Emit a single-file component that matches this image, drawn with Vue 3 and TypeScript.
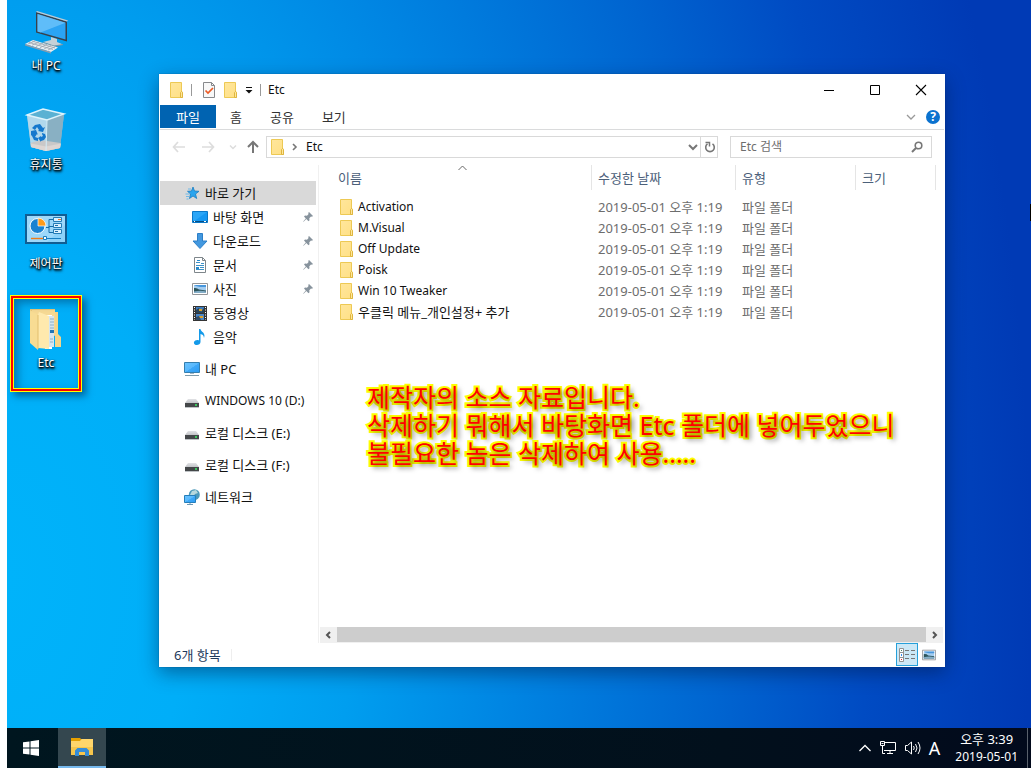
<script setup lang="ts">
interface DesktopItem { kind: string; label: string; marked?: boolean }
interface NavItem { icon: string; label: string; level: number; pinned?: boolean; active?: boolean; spaced?: boolean }

const desktopItems: DesktopItem[] = [
  { kind: 'pc', label: '내 PC' },
  { kind: 'bin', label: '휴지통' },
  { kind: 'control', label: '제어판' },
  { kind: 'etc', label: 'Etc', marked: true },
]
const tabs: string[] = ['파일', '홈', '공유', '보기']
const navItems: NavItem[] = [
  { icon: 'star', label: '바로 가기', level: 1, active: true },
  { icon: 'desktop', label: '바탕 화면', level: 2, pinned: true },
  { icon: 'download', label: '다운로드', level: 2, pinned: true },
  { icon: 'doc', label: '문서', level: 2, pinned: true },
  { icon: 'photo', label: '사진', level: 2, pinned: true },
  { icon: 'video', label: '동영상', level: 2 },
  { icon: 'music', label: '음악', level: 2 },
  { icon: 'pc', label: '내 PC', level: 1, spaced: true },
  { icon: 'drive', label: 'WINDOWS 10 (D:)', level: 1, spaced: true },
  { icon: 'drive', label: '로컬 디스크 (E:)', level: 1, spaced: true },
  { icon: 'drive', label: '로컬 디스크 (F:)', level: 1, spaced: true },
  { icon: 'network', label: '네트워크', level: 1, spaced: true },
]
const files: string[] = ['Activation', 'M.Visual', 'Off Update', 'Poisk', 'Win 10 Tweaker', '우클릭 메뉴_개인설정+ 추가']
const notes: string[] = [
  '제작자의 소스 자료입니다.',
  '삭제하기 뭐해서 바탕화면 Etc 폴더에 넣어두었으니',
  '불필요한 놈은 삭제하여 사용.....',
]
const isKorean = (text: string): boolean => /[가-힣]/.test(text)
</script>

<template>
  <div class="screen">
    <svg class="defs" width="0" height="0" aria-hidden="true">
      <defs>
        <linearGradient id="gFolder" x1="0" y1="0" x2="1" y2="1">
          <stop offset="0" stop-color="#ffe69c" /><stop offset="1" stop-color="#ffe085" />
        </linearGradient>
        <linearGradient id="gScreen" x1="0" y1="0" x2="1" y2="1">
          <stop offset="0" stop-color="#6cc4ff" /><stop offset="0.5" stop-color="#58b8fc" /><stop offset="0.52" stop-color="#3ea8f8" /><stop offset="1" stop-color="#2c9cf4" />
        </linearGradient>
        <linearGradient id="gDrive" x1="0" y1="0" x2="0" y2="1">
          <stop offset="0" stop-color="#e2e3e6" /><stop offset="1" stop-color="#c2c4c8" />
        </linearGradient>
        <symbol id="folder" viewBox="0 0 16 16">
          <path d="M.5.500h11v9.500h1v5.500H.5z" fill="url(#gFolder)" stroke="#edc954" />
          <path d="M10.500 15.500v-5l1-1 1 1v5z" fill="#ffe79a" stroke="#dfb640" />
        </symbol>
        <symbol id="photo" viewBox="0 0 16 16">
          <path d="M.5 2.500h15v11H.5z" fill="#fff" stroke="#939598" />
          <path d="M2 4h12v8H2z" fill="#a4cdf0" />
          <path d="M2 4h12v2H8L4 5z" fill="#4796dc" />
          <path d="M2 7q3-.5 5 1.500l7 1V12H2z" fill="#2d555c" />
          <path d="M2 10.500q7-1.500 12 0V12H2z" fill="#83adc7" />
        </symbol>
      </defs>
    </svg>

    <div class="desktop">
      <main class="workspace">
        <div class="icons">
          <button v-for="item in desktopItems" :key="item.kind" class="desk-icon" type="button">
            <svg v-if="item.kind === 'pc'" width="48" height="48" viewBox="0 0 48 48">
              <path d="M14 4l31 9.500v20L14 24.500z" fill="#39404a" />
              <path d="M14 4l1-1 31 9.500-1 1z" fill="#c4cbd2" />
              <path d="M15.500 6l28 8.700v16.800l-28-8z" fill="#2ba4f4" />
              <path d="M15.500 6l28 8.700-25 9.700-3-1z" fill="#72c5fb" opacity=".75" />
              <path d="M29 29l6 2v3l6 2.500-9 1.500-11-4 8-2z" fill="#c5d1d8" />
              <path d="M21 34l11 3.500 9-1.500v1l-9 2-11-4z" fill="#7895a4" />
              <path d="M3 36l8-4 25 7.500-7 4.500z" fill="#e9edf0" />
              <path d="M3 36l26 8v1.500L3 37.500z" fill="#8b9cac" />
              <path d="M6 36l7-3M10 37.200l7-3.200M14 38.500l7-3.500M18 39.700l7-3.400M22 41l7-3.500M26 42l7-3.200M7 34.500l24 7M10 33l23 7" stroke="#9aa5af" stroke-width=".8" />
            </svg>
            <svg v-else-if="item.kind === 'bin'" width="48" height="48" viewBox="0 0 48 48">
              <path d="M5 8l16-6 21 5-4 34-14 3-15-4z" fill="#95bdd2" />
              <path d="M5 8l20 5-1 31-15-4z" fill="#b1d8ec" />
              <path d="M25 13l17-6-4 34-14 3z" fill="#89b0c3" />
              <path d="M8.500 36l10-3 20 3-.5 5-14 3-15-4z" fill="#c9c8c8" />
              <path d="M9 36.500l15 3 15-3-1 4.500-14 3-15-4z" fill="#ddd6d3" />
              <path d="M5 8l16-6 21 5-17 6z" fill="#5ab1d3" stroke="#ddf3fc" stroke-width="1.400" />
              <path d="M25 13l-1 31" stroke="#d4edf8" />
              <g fill="#1478cd">
                <path d="M13 18l5-1 3 4 2-1-2 5-5-1 1-1-2-3-2 3-3-2z" />
                <path d="M9 24l5-1 2 5-1-1-2 3 3 1v3l-4-1-2-4-1-1z" />
                <path d="M20 26l3 1 1 3-2 3-3 1v1l-3-4 3-2v1l2-1-1-2z" />
              </g>
            </svg>
            <svg v-else-if="item.kind === 'control'" width="48" height="48" viewBox="0 0 48 48">
              <path d="M3 8h42v30H3z" fill="#115d92" />
              <path d="M5 10h38v26H5z" fill="#8bd2fa" />
              <path d="M5 10h38v9L25 36H5z" fill="#a7dcfb" opacity=".65" />
              <circle cx="15.500" cy="20" r="7.500" fill="#1982d1" stroke="#fff" />
              <path d="M16 20v-8a8 8 0 018 8z" fill="#ff9b19" stroke="#fff" stroke-width=".7" />
              <path d="M24 21.500h3v-8h4M27 20.500h4M27 20.500v6h4" fill="none" stroke="#146daa" />
              <path d="M31.500 11.500h8v4h-8zM31.500 17.500h8v4h-8zM31.500 23.500h8v4h-8z" fill="#daf1ff" stroke="#237cb7" />
              <path d="M36 13.500h3" stroke="#ef752b" /><path d="M33 19.500h3M33 25.500h3" stroke="#1c70ac" />
              <path d="M9 32.500h12" stroke="#ee7b19" stroke-width="1.400" /><path d="M25 32.500h14" stroke="#177ec1" />
              <path d="M21.500 30.500h3v3h-3z" fill="#fff" stroke="#177ec1" />
            </svg>
            <svg v-else width="48" height="48" viewBox="0 0 48 48">
              <path d="M8 4h25v27H8z" fill="#e9c676" />
              <path d="M10 5h23v25H10z" fill="#f6d993" />
              <path d="M23 10h7v34h-7z" fill="#fff" />
              <path d="M26 11h6v31h-5z" fill="#d6e5ee" />
              <path d="M28 14h4M28 17h4M28 20h4M28 23h4M28 34h3M28 37h3" stroke="#8cb0c8" />
              <path d="M28 25h4v3h-4z" fill="#2176b6" />
              <path d="M33 7h3v22l3 3v10h-6z" fill="#f4d58a" />
              <path d="M8 5l8 5v35l-8-7z" fill="#f8dc93" />
              <path d="M16 10l1-3 10 4v33l-11-1z" fill="#ffe9ad" />
              <path d="M16 10v34" stroke="#e2bf6f" />
            </svg>
            <span>{{ item.label }}</span>
            <i v-if="item.marked" class="marker"></i>
          </button>
        </div>

        <section class="window">
          <header class="titlebar">
            <svg width="16" height="16"><use href="#folder" /></svg>
            <i class="bar"></i>
            <button class="quick" type="button" aria-label="속성">
              <svg width="14" height="16" viewBox="0 0 14 16">
                <path d="M1.500.5h8l3 3v12h-11z" fill="#f8f8f8" stroke="#87898c" /><path d="M9.500.5v3h3" fill="none" stroke="#87898c" />
                <path d="M3.500 8.500l2.500 2.500 5-5" fill="none" stroke="#ec5a24" stroke-width="1.700" />
              </svg>
            </button>
            <button class="quick" type="button" aria-label="새 폴더"><svg width="16" height="16"><use href="#folder" /></svg></button>
            <button class="quick narrow" type="button" aria-label="사용자 지정">
              <svg width="8" height="8" viewBox="0 0 8 8"><path d="M1 1.500h6" stroke="#111" /><path d="M.5 4h7L4 7.500z" fill="#111" /></svg>
            </button>
            <i class="bar late"></i>
            <h1>Etc</h1>
            <div class="controls">
              <button type="button" aria-label="최소화"><svg width="12" height="12" viewBox="0 0 12 12"><path d="M1 6.500h10" stroke="#000" /></svg></button>
              <button type="button" aria-label="최대화"><svg width="12" height="12" viewBox="0 0 12 12"><path d="M1.500 1.500h9v9h-9z" fill="none" stroke="#000" /></svg></button>
              <button type="button" aria-label="닫기"><svg width="12" height="12" viewBox="0 0 12 12"><path d="M1 1l10 10M11 1L1 11" stroke="#000" stroke-width="1.100" /></svg></button>
            </div>
          </header>

          <nav class="ribbon">
            <button v-for="(tab, i) in tabs" :key="tab" type="button" :class="{ primary: i === 0 }">{{ tab }}</button>
            <div class="ribbon-end">
              <button type="button" aria-label="리본 확장"><svg width="10" height="6" viewBox="0 0 10 6"><path d="M1 1l4 4 4-4" fill="none" stroke="#999" stroke-width="1.300" /></svg></button>
              <button class="help" type="button" aria-label="도움말">?</button>
            </div>
          </nav>

          <div class="address-row">
            <button class="history" type="button" aria-label="뒤로"><svg width="14" height="12" viewBox="0 0 14 12"><path d="M13 6H2M6 1L1.500 6 6 11" fill="none" stroke="#ddd" stroke-width="1.700" /></svg></button>
            <button class="history" type="button" aria-label="앞으로"><svg width="14" height="12" viewBox="0 0 14 12"><path d="M1 6h11M8 1l4.500 5L8 11" fill="none" stroke="#ddd" stroke-width="1.700" /></svg></button>
            <button class="recent" type="button" aria-label="최근 위치"><svg width="8" height="6" viewBox="0 0 8 6"><path d="M1 1.500l3 3 3-3" fill="none" stroke="#ddd" stroke-width="1.500" /></svg></button>
            <button class="up" type="button" aria-label="위로"><svg width="14" height="14" viewBox="0 0 14 14"><path d="M7 13V2M2 7l5-5 5 5" fill="none" stroke="#777" stroke-width="2" /></svg></button>
            <div class="address">
              <svg width="16" height="16"><use href="#folder" /></svg>
              <svg width="6" height="8" viewBox="0 0 6 8"><path d="M1 1l3 3-3 3" fill="none" stroke="#777" stroke-width="1.600" /></svg>
              <button class="crumb" type="button">Etc</button>
              <button class="drop" type="button" aria-label="이전 위치"><svg width="10" height="7" viewBox="0 0 10 7"><path d="M1 1l4 4 4-4" fill="none" stroke="#777" stroke-width="2" /></svg></button>
              <button class="refresh" type="button" aria-label="새로 고침"><svg width="12" height="12" viewBox="0 0 12 12"><path d="M8.500 2.800a4.300 4.300 0 11-5 0" fill="none" stroke="#777" stroke-width="1.600" /><path d="M1.500 1.500h4v4" fill="none" stroke="#777" stroke-width="1.500" /></svg></button>
            </div>
            <label class="search">
              <input type="text" placeholder="Etc 검색" aria-label="Etc 검색" />
              <svg width="12" height="12" viewBox="0 0 12 12"><circle cx="7.500" cy="4.500" r="3.300" fill="none" stroke="#777" stroke-width="1.600" /><path d="M5 7L1 11" stroke="#777" stroke-width="2" /></svg>
            </label>
          </div>

          <div class="body">
            <nav class="side">
              <a v-for="item in navItems" :key="item.label" href="#" :class="['level' + item.level, { active: item.active, spaced: item.spaced, ko: isKorean(item.label) }]">
                <svg v-if="item.icon === 'star'" width="16" height="16" viewBox="0 0 16 16">
                  <path d="M9 2l1.500 4 4.500.3-3.500 2.700 1.200 4.500L9 11l-3.500 2.500 1-4.500L3.500 6.300l4-.3z" fill="#2ba5ee" stroke="#1b7dc2" stroke-width=".8" />
                  <path d="M4 4h3M1.500 9h4M2 11.500h3M2.500 14h2" stroke="#6eb9e8" />
                </svg>
                <svg v-else-if="item.icon === 'desktop'" width="16" height="16" viewBox="0 0 16 16">
                  <path d="M.5 2.500h15v11H.5z" fill="#2ba6f7" stroke="#0b78c8" /><path d="M1 13L15 3v10z" fill="#1698f2" /><path d="M1 12.500h14" stroke="#064d83" /><path d="M2 12.500h1M12 12.500h2" stroke="#fff" />
                </svg>
                <svg v-else-if="item.icon === 'download'" width="16" height="16" viewBox="0 0 16 16"><path d="M5.500.5h5V8h4.500l-7 7.500L1 8h4.500z" fill="#4398df" stroke="#2c7fc8" /></svg>
                <svg v-else-if="item.icon === 'doc'" width="16" height="16" viewBox="0 0 16 16">
                  <path d="M2.500.5h8l3 3v12h-11z" fill="#fff" stroke="#7e868b" /><path d="M10.500.5v3h3" fill="none" stroke="#7e868b" /><path d="M4 5.500h4M9 6.500h3M4 8.500h8M8 10.500h4M4 12.500h8" stroke="#3c91c7" /><path d="M4 10h3v2H4z" fill="#2488cd" /><path d="M5 3.500h3" stroke="#2488cd" />
                </svg>
                <svg v-else-if="item.icon === 'photo'" width="16" height="16"><use href="#photo" /></svg>
                <svg v-else-if="item.icon === 'video'" width="16" height="16" viewBox="0 0 16 16">
                  <path d="M1 1h14v15H1z" fill="#343434" /><path d="M4 2h8v6H4z" fill="#3c7bbc" /><path d="M4 9h8v6H4z" fill="#4886c8" /><path d="M4 5l3-2 2 4 3-4v5H4z" fill="#284357" /><path d="M7 4h3v2H7zM7 11h4v2H7z" fill="#dda129" /><path d="M4 12l3-1 2 4H4z" fill="#304b67" /><path d="M2.500 2v13M13.500 2v13" stroke="#fff" stroke-dasharray="1 1.500" />
                </svg>
                <svg v-else-if="item.icon === 'music'" width="16" height="16" viewBox="0 0 16 16"><path d="M7 0h1.500c0 3 5.500 3 3.500 9-.3-3-1.500-3.500-3.500-4v8c0 4-7.500 4-6.500 0 .6-2 3.500-2.500 5-1.600z" fill="#149ae9" /></svg>
                <svg v-else-if="item.icon === 'pc'" width="16" height="16" viewBox="0 0 16 16"><path d="M.5 1.500h15v10H.5z" fill="url(#gScreen)" stroke="#347eae" /><path d="M6 12h4v1H6z" fill="#a3b8c6" /><path d="M1 14.500h14" stroke="#7f9baa" /></svg>
                <svg v-else-if="item.icon === 'drive'" width="16" height="16" viewBox="0 0 16 16"><path d="M4 6h8l3 4H1z" fill="url(#gDrive)" /><path d="M1 10h14v4H1z" fill="#444749" /><path d="M1 14.500h14" stroke="#bfc3c6" /><path d="M11 12h2" stroke="#39ee65" stroke-width="1.500" /></svg>
                <svg v-else width="16" height="16" viewBox="0 0 16 16"><circle cx="10.300" cy="5.700" r="5.500" fill="#4b98b9" /><path d="M8 2l4-1 2 3-3 1-2 3-3-2z" fill="#b7d8dd" /><path d="M.5 6.500h11v7H.5z" fill="url(#gScreen)" stroke="#257eba" /><path d="M3 15.500h6M6 14v1" stroke="#6e98b3" /></svg>
                <span>{{ item.label }}</span>
                <svg v-if="item.pinned" class="pin" width="10" height="10" viewBox="0 0 10 10"><path d="M6 0l4 4-1 .8-1-.3-1.700 1.800.2 2-1 .9-2.200-2.300L.6 9.800l-.4-.4 2.600-3L1 4.400l1-.9 2 .2L5.600 2 5.200.9z" fill="#87939d" /></svg>
              </a>
            </nav>

            <div class="content">
              <div class="list-area">
                <table>
                  <colgroup><col /><col class="c-date" /><col class="c-type" /><col class="c-size" /></colgroup>
                  <thead>
                    <tr>
                      <th scope="col">이름<svg class="sort" width="9" height="6" viewBox="0 0 9 6"><path d="M.5 5l4-4 4 4" fill="none" stroke="#666" /></svg></th>
                      <th scope="col">수정한 날짜</th><th scope="col">유형</th><th scope="col">크기</th>
                    </tr>
                  </thead>
                  <tbody>
                    <tr v-for="name in files" :key="name">
                      <td class="name"><div :class="{ ko: isKorean(name) }"><svg width="16" height="16"><use href="#folder" /></svg>{{ name }}</div></td>
                      <td>2019-05-01 오후 1:19</td><td>파일 폴더</td><td></td>
                    </tr>
                  </tbody>
                </table>
                <div class="note"><p v-for="line in notes" :key="line">{{ line }}</p></div>
              </div>
              <div class="scrollbar">
                <button type="button" aria-label="왼쪽"><svg width="7" height="8" viewBox="0 0 7 8"><path d="M5 1L2 4l3 3" fill="none" stroke="#555" stroke-width="2" /></svg></button>
                <i></i>
                <button type="button" aria-label="오른쪽"><svg width="7" height="8" viewBox="0 0 7 8"><path d="M2 1l3 3-3 3" fill="none" stroke="#555" stroke-width="2" /></svg></button>
              </div>
            </div>
          </div>

          <footer class="status">
            <span class="ko">6개 항목</span>
            <div class="views">
              <button class="on" type="button" aria-label="자세히">
                <svg width="18" height="14" viewBox="0 0 18 14"><path d="M1.500.5h4v13h-4zM1.500 4.500h4M1.500 9.500h4" fill="#fff" stroke="#929292" /><path d="M7 2.500h4M13 2.500h4M7 6.500h4M13 6.500h4M7 10.500h4M13 10.500h4" stroke="#777" /><path d="M3 2h1v1H3z" fill="#46825f" /><path d="M3 6h1v2H3z" fill="#368ef0" /><path d="M3 11h1v1H3z" fill="#e12a32" /></svg>
              </button>
              <button type="button" aria-label="큰 아이콘"><svg width="14" height="14" viewBox="0 0 16 16"><use href="#photo" /></svg></button>
            </div>
          </footer>
        </section>
      </main>

      <footer class="taskbar">
        <button class="start" type="button" aria-label="시작"><svg width="16" height="16" viewBox="0 0 16 16"><path d="M0 2.300l6.500-.9v6.100H0zM7.500 1.200L16 0v7.500H7.500zM0 8.500h6.500v6.100L0 13.700zM7.500 8.500H16V16l-8.500-1.200z" fill="#fff" /></svg></button>
        <button class="explorer" type="button" aria-label="파일 탐색기">
          <svg width="22" height="18" viewBox="0 0 22 18"><path d="M0 0h9l1.500 1.500V5H0z" fill="#e5a000" /><path d="M0 3h9l1.500-2H22v16H0z" fill="#ffd66b" /><path d="M0 9h22v8H0z" fill="#f6c64c" /><path d="M4 18v-5.500L6.500 10h9l2.500 2.500V18h-4v-4H8v4z" fill="#358dd8" /></svg>
        </button>
        <div class="tray">
          <button type="button" aria-label="숨겨진 아이콘"><svg width="14" height="8" viewBox="0 0 14 8"><path d="M1.500 7L7 1.500 12.500 7" fill="none" stroke="#fff" stroke-width="1.300" /></svg></button>
          <button type="button" aria-label="네트워크"><svg width="18" height="16" viewBox="0 0 18 16"><path d="M6 2.500h10.500v8H5M8 13.500h6M11 10.500v3M1.500 1.500h4v4h-4zM3.500 5.500v8H6M2.500 3.500h2" fill="none" stroke="#fff" /></svg></button>
          <button type="button" aria-label="볼륨"><svg width="18" height="16" viewBox="0 0 18 16"><path d="M1.500 5.500h2l4-3.500v12l-4-3.500h-2z" fill="none" stroke="#fff" /><path d="M9.500 6q1.500 2 0 4M11.500 4q3 4 0 8M14 2q4 6 0 12" fill="none" stroke="#fff" /></svg></button>
          <button class="ime" type="button">A</button>
          <button class="clock" type="button"><span class="ko">오후 3:39</span><span>2019-05-01</span></button>
          <button class="peek" type="button" aria-label="바탕 화면 보기"></button>
        </div>
      </footer>
    </div>
  </div>
</template>

<style>
html, body { margin: 0; background: #fff; }
</style>

<style scoped>
* { box-sizing: border-box; }
.screen {
  display: flex;
  min-height: 100vh;
  padding-left: 7px;
  font-family: "Noto Sans", "Noto Sans CJK KR", sans-serif;
  font-size: 12px;
  line-height: 16px;
  color: #111;
}
.defs { position: absolute; }
button { margin: 0; padding: 0; border: 0; background: none; font: inherit; color: inherit; }
svg { display: block; flex: none; }
.ko { font-size: 13px; }

.desktop {
  flex: 1;
  min-width: 0;
  display: flex;
  flex-direction: column;
  background: radial-gradient(ellipse 100% 220% at 0% 75%, #00b3fa 0%, #00aef8 18%, #009eef 34%, #0084e2 50%, #0064d0 70%, #004bc3 84%, #003ab5 100%);
}
.workspace { position: relative; flex: 1; display: flex; }
.workspace::after {
  content: "";
  position: absolute;
  top: 204px;
  right: 0;
  width: 1px;
  height: 17px;
  background: #000;
}
.icons { width: 78px; display: flex; flex-direction: column; }
.desk-icon {
  position: relative;
  height: 99px;
  padding-top: 8px;
  display: flex;
  flex-direction: column;
  align-items: center;
  gap: 2px;
  color: #fff;
  text-shadow: 1px 1px 2px #000, 0 1px 2px #000, 1px 2px 3px #000;
}
.marker {
  position: absolute;
  inset: -2px 3px 4px;
  border: 1px solid #ff0;
  box-shadow: inset 0 0 0 2px #f00, inset 0 0 0 3px #ff0, inset 4px 4px 8px 3px rgba(0, 50, 90, .45), 4px 4px 7px rgba(0, 40, 80, .55);
}

.window {
  position: absolute;
  inset: 74px 86px 61px 152px;
  display: flex;
  flex-direction: column;
  background: #fff;
  border: 1px solid rgba(255, 255, 255, .9);
  box-shadow: 0 0 1px rgba(0, 40, 90, .6), 0 6px 18px rgba(0, 20, 60, .45);
}
.titlebar { height: 30px; display: flex; align-items: center; padding-left: 10px; }
.bar { width: 1px; height: 12px; margin: 0 10px 0 5px; background: #999; }
.bar.late { margin: 0 7px; }
.quick { height: 16px; margin-right: 8px; }
.quick.narrow { height: 8px; margin: 0 0 0 -3px; }
h1 { margin: 0; font-size: 12px; font-weight: 400; }
.controls { display: flex; margin-left: auto; }
.controls button { width: 46px; height: 28px; display: grid; place-items: center; }

.ribbon { height: 25px; display: flex; border-bottom: 1px solid #dadbdc; color: #333; }
.ribbon > button { height: 23px; padding: 0 14px; font-size: 13px; }
.ribbon > button.primary { width: 56px; background: #0063b1; color: #fff; }
.ribbon-end { display: flex; align-items: center; gap: 10px; margin-left: auto; padding-right: 4px; }
.help { width: 14px; height: 14px; border-radius: 50%; background: #0b72cf; color: #fff; font-size: 12px; font-weight: 700; line-height: 14px; }

.address-row { height: 35px; display: flex; align-items: center; padding: 0 12px 1px; color: #111; }
.history { margin-right: 15px; }
.recent { margin: 0 9px 0 -1px; }
.up { margin-right: 6px; }
.address { flex: 1; height: 22px; display: flex; align-items: center; border: 1px solid #d9d9d9; padding-left: 4px; }
.address > svg + svg { margin-left: 5px; }
.crumb { margin-left: 8px; }
.drop { margin-left: auto; padding: 0 2px 0 3px; }
.refresh { height: 20px; padding: 0 1px 0 3px; border-left: 1px solid #d9d9d9; }
.search { width: 202px; height: 22px; display: flex; align-items: center; margin-left: 12px; padding: 0 8px 0 9px; border: 1px solid #d9d9d9; }
.search input { flex: 1; min-width: 0; padding: 0; border: 0; outline: 0; background: none; font: inherit; color: #6d6d6d; }
.search input::placeholder { color: #6d6d6d; opacity: 1; }

.body { flex: 1; min-height: 0; display: flex; }
.side { width: 159px; padding: 16px 2px 0 0; border-right: 1px solid #f0f0f0; display: flex; flex-direction: column; }
.side a { height: 24px; display: flex; align-items: center; gap: 5px; padding-right: 3px; color: #111; text-decoration: none; }
.side a.level1 { padding-left: 24px; }
.side a.level2 { padding-left: 32px; }
.side a.active { background: #d9d9d9; }
.side a.spaced { margin-top: 8px; }
.side span { white-space: nowrap; }
.pin { margin-left: auto; }

.content { flex: 1; min-width: 0; display: flex; flex-direction: column; }
.list-area { position: relative; flex: 1; padding: 0 8px 0 13px; }
table { width: 100%; table-layout: fixed; border-collapse: separate; border-spacing: 0; color: #6d6d6d; font-size: 13px; }
.c-date { width: 144px; }
.c-type { width: 120px; }
.c-size { width: 80px; }
th { position: relative; height: 25px; padding: 0 0 0 6px; border-right: 1px solid #e5e5e5; color: #4c607a; font-weight: 400; text-align: left; }
.sort { position: absolute; top: 0; left: 50%; margin-left: -4px; }
td { height: 21px; padding: 0 0 0 6px; white-space: nowrap; }
tbody tr:first-child td { height: 27px; padding-top: 6px; }
.name { color: #111; font-size: 12px; }
.name div { display: flex; align-items: center; gap: 2px; padding-left: 2px; }
.note {
  position: absolute;
  top: 218px;
  left: 48px;
  color: #f00;
  font-size: 25px;
  line-height: 28px;
  white-space: nowrap;
  -webkit-text-stroke: 4px #ff0;
  paint-order: stroke fill;
  text-shadow: 3px 3px 5px rgba(0, 0, 0, .6);
}
.note p { margin: 0; }

.scrollbar { height: 16px; display: flex; margin: 0 1px; background: #f0f0f0; }
.scrollbar button { width: 17px; display: grid; place-items: center; }
.scrollbar i { flex: 1; margin-bottom: 1px; background: #cdcdcd; }

.status { height: 23px; display: flex; align-items: center; justify-content: space-between; padding: 0 8px 0 14px; color: #1e395b; }
.status span { padding-right: 10px; border-right: 1px solid #eee; line-height: 12px; }
.views { display: flex; gap: 4px; }
.views button { display: grid; place-items: center; }
.views .on { width: 22px; height: 23px; border: 1px solid #26a0da; background: #cce8f6; }

.taskbar { height: 40px; display: flex; background: linear-gradient(90deg, #00161f, #02101c 70%, #020a1c); color: #fff; }
.start { width: 51px; display: grid; place-items: center; padding-right: 3px; }
.explorer { width: 48px; display: grid; place-items: center; background: #34474f; border-bottom: 2px solid #76b9ed; }
.tray { margin-left: auto; display: flex; align-items: stretch; gap: 7px; }
.tray button { display: grid; place-items: center; align-content: center; }
.tray .ime { font-size: 18px; }
.tray .clock { padding: 0 4px 0 8px; line-height: 18px; }
.tray .peek { width: 4px; margin-left: -2px; border-left: 1px solid #59616c; }
</style>
